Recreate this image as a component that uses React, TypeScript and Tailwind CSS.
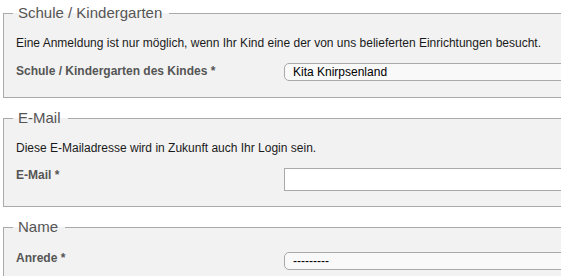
import React from "react";

const font = { fontFamily: '"Liberation Sans", Arial, Helvetica, sans-serif' };

function Legend({ children }: { children: React.ReactNode }) {
  return (
    <legend className="ml-[-3px] pl-[5px] pr-[7px] text-[15px] leading-[18px] text-[#555]">
      {children}
    </legend>
  );
}

function SelectBox({ value, extra }: { value: string; extra?: string }) {
  return (
    <div
      className={
        "h-[18px] w-[320px] rounded-[5px] border border-[#a9a9a9] bg-[#f9f9f9] pl-[8px] text-[12px] leading-[16px] text-black " +
        (extra ?? "")
      }
    >
      {value}
    </div>
  );
}

export default function App() {
  return (
    <div className="w-[561px] h-[276px] overflow-hidden bg-white pt-[4px]" style={font}>
      <div className="flex w-[640px] flex-col gap-[11px] pl-[3px]">
        <fieldset className="border border-[#aaaaaa] bg-[#f2f2f2] px-[12px] pb-[16px]">
          <Legend>Schule / Kindergarten</Legend>
          <p className="mt-[13px] text-[12px] leading-[16px] text-[#1a1a1a]">
            Eine Anmeldung ist nur möglich, wenn Ihr Kind eine der von uns belieferten Einrichtungen besucht.
          </p>
          <div className="mt-[12px] flex items-start">
            <label className="w-[268px] shrink-0 text-[12px] font-bold leading-[16px] text-[#555]">
              Schule / Kindergarten des Kindes *
            </label>
            <SelectBox value="Kita Knirpsenland" />
          </div>
        </fieldset>

        <fieldset className="border border-[#aaaaaa] bg-[#f2f2f2] px-[12px] pb-[15px]">
          <Legend>E-Mail</Legend>
          <p className="mt-[13px] text-[12px] leading-[16px] text-[#1a1a1a]">
            Diese E-Mailadresse wird in Zukunft auch Ihr Login sein.
          </p>
          <div className="mt-[11px] flex items-start">
            <label className="w-[268px] shrink-0 text-[12px] font-bold leading-[16px] text-[#555]">
              E-Mail *
            </label>
            <div className="mt-[1px] h-[23px] w-[320px] border border-[#a9a9a9] bg-white" />
          </div>
        </fieldset>

        <fieldset className="border border-[#aaaaaa] bg-[#f2f2f2] px-[12px] pb-[16px]">
          <Legend>Name</Legend>
          <div className="mt-[14px] flex items-start">
            <label className="w-[268px] shrink-0 text-[12px] font-bold leading-[16px] text-[#555]">
              Anrede *
            </label>
            <SelectBox value="---------" extra="mt-[2px]" />
          </div>
        </fieldset>
      </div>
    </div>
  );
}
